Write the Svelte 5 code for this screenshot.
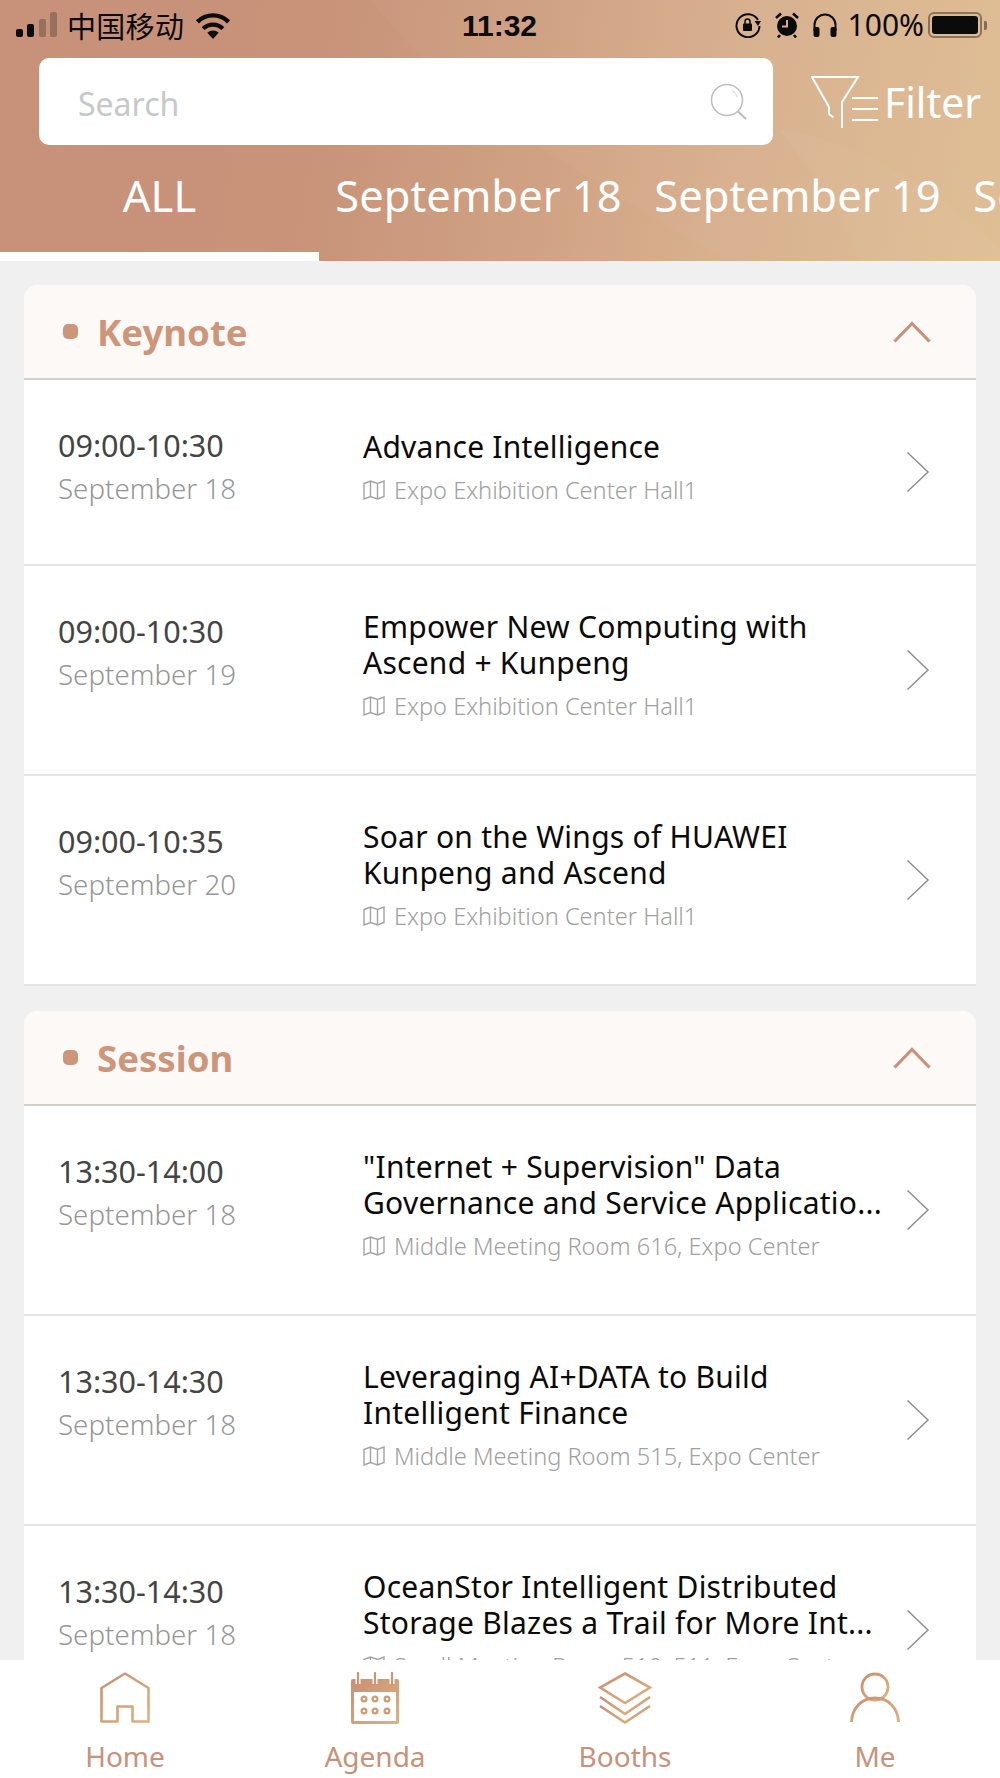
<script>
  const tabs = ['ALL', 'September 18', 'September 19', 'September 20'];
  const sections = [
    {
      name: 'Keynote',
      rows: [
        { time: '09:00-10:30', date: 'September 18', title: 'Advance Intelligence', place: 'Expo Exhibition Center Hall1' },
        { time: '09:00-10:30', date: 'September 19', title: 'Empower New Computing with Ascend + Kunpeng', place: 'Expo Exhibition Center Hall1' },
        { time: '09:00-10:35', date: 'September 20', title: 'Soar on the Wings of HUAWEI Kunpeng and Ascend', place: 'Expo Exhibition Center Hall1' }
      ]
    },
    {
      name: 'Session',
      rows: [
        { time: '13:30-14:00', date: 'September 18', title: '"Internet + Supervision" Data Governance and Service Applicatio...', place: 'Middle Meeting Room 616, Expo Center' },
        { time: '13:30-14:30', date: 'September 18', title: 'Leveraging AI+DATA to Build Intelligent Finance', place: 'Middle Meeting Room 515, Expo Center' },
        { time: '13:30-14:30', date: 'September 18', title: 'OceanStor Intelligent Distributed Storage Blazes a Trail for More Int...', place: 'Small Meeting Room 510, 511, Expo Center' }
      ]
    }
  ];
</script>

<div class="page">
  <header class="top">
    <svg class="waves" viewBox="0 0 1000 261" preserveAspectRatio="none" aria-hidden="true">
      <path d="M370 0 C420 60 470 110 560 160 C640 210 690 240 730 261 L1000 261 L1000 0 Z" fill="#fff" opacity="0.025" />
      <path d="M780 130 C860 140 940 190 1000 250 L1000 261 L860 261 C840 210 810 170 780 130 Z" fill="#fff" opacity="0.03" />
    </svg>

    <div class="status">
      <div class="status-left">
        <svg class="signal" viewBox="0 0 42 26" width="42" height="26" aria-hidden="true">
          <rect x="0" y="17" width="7" height="8" rx="2" fill="#0b0b0b" />
          <rect x="11" y="12" width="7" height="13" rx="2" fill="#0b0b0b" />
          <rect x="23" y="7" width="7" height="18" rx="2" fill="#0b0b0b" opacity="0.25" />
          <rect x="34" y="0" width="7" height="25" rx="2" fill="#0b0b0b" opacity="0.25" />
        </svg>
        <span class="carrier">中国移动</span>
        <svg viewBox="0 0 36 26" width="38" height="27" aria-hidden="true">
          <path d="M18 26 L12.5 20 A8 8 0 0 1 23.5 20 Z" fill="#0b0b0b" />
          <path d="M8.5 16 A13.5 13.5 0 0 1 27.5 16" fill="none" stroke="#0b0b0b" stroke-width="4" />
          <path d="M3 9.5 A21 21 0 0 1 33 9.5" fill="none" stroke="#0b0b0b" stroke-width="4.2" />
        </svg>
      </div>
      <div class="clock">11:32</div>
      <div class="status-right">
        <svg viewBox="0 0 26 26" width="26" height="26" aria-hidden="true">
          <path d="M23 8 A11.5 11.5 0 1 0 24.5 14" fill="none" stroke="#0b0b0b" stroke-width="2" />
          <path d="M19.5 9 L26 9 L23 14 Z" fill="#0b0b0b" />
          <rect x="8" y="11.5" width="9" height="7.5" rx="1" fill="#0b0b0b" />
          <path d="M10 12 V9.5 A2.5 2.5 0 0 1 15 9.5 V12" fill="none" stroke="#0b0b0b" stroke-width="1.5" />
        </svg>
        <svg class="alarm" viewBox="0 0 24 26" width="24" height="26" aria-hidden="true">
          <circle cx="12" cy="14" r="10" fill="#0b0b0b" />
          <path d="M1 6 L6 1.5 M23 6 L18 1.5 M5 23 L3 25.5 M19 23 L21 25.5" stroke="#0b0b0b" stroke-width="2.6" />
          <path d="M12 8 V14.5 H7" fill="none" stroke="#d6ac8c" stroke-width="2" />
        </svg>
        <svg class="phones" viewBox="0 0 26 24" width="26" height="24" aria-hidden="true">
          <path d="M2.5 18 V12 A10.5 10.5 0 0 1 23.5 12 V18" fill="none" stroke="#0b0b0b" stroke-width="2" />
          <rect x="1.5" y="14" width="6" height="10" rx="2" fill="#0b0b0b" />
          <rect x="18.5" y="14" width="6" height="10" rx="2" fill="#0b0b0b" />
        </svg>
        <span class="pct">100%</span>
        <span class="battery"><span class="level"></span></span>
        <span class="cap"></span>
      </div>
    </div>

    <div class="search-row">
      <div class="search">
        <span class="placeholder">Search</span>
        <svg viewBox="0 0 38 38" width="38" height="38" aria-hidden="true">
          <circle cx="17" cy="17" r="15.5" fill="none" stroke="#bcbec0" stroke-width="1.6" />
          <path d="M27.5 28 L36 36" stroke="#bcbec0" stroke-width="2" />
          <path d="M22 7.5 A11 11 0 0 1 27 14" fill="none" stroke="#dcdddd" stroke-width="1.2" />
        </svg>
      </div>
      <div class="filter">
        <svg viewBox="0 0 68 54" width="68" height="54" aria-hidden="true">
          <path d="M18 32 V39 L22.5 42.500 M18 32 L1 2 H47 L31 27 V53" fill="none" stroke="#fff" stroke-width="2" />
          <path d="M41 23 H67 M41 34 H67 M41 45 H67" stroke="#fff" stroke-width="2" />
        </svg>
        <span>Filter</span>
      </div>
    </div>

    <nav class="tabs">
      {#each tabs as tab, i}
        <div class="tab" class:active={i === 0}>{tab}</div>
      {/each}
    </nav>
  </header>

  <main class="list">
    {#each sections as section}
      <section class="card">
        <div class="card-head">
          <span class="dot"></span>
          <h2>{section.name}</h2>
          <svg viewBox="0 0 38 22" width="38" height="22" aria-hidden="true">
            <path d="M1.5 20.5 L19 2.5 L36.5 20.5" fill="none" stroke="#c8917a" stroke-width="3.2" />
          </svg>
        </div>
        {#each section.rows as row}
          <div class="row">
            <div class="when">
              <div class="time">{row.time}</div>
              <div class="date">{row.date}</div>
            </div>
            <div class="what">
              <div class="title">{row.title}</div>
              <div class="place">
                <svg viewBox="0 0 22 22" width="22" height="22" aria-hidden="true">
                  <path d="M1 4.5 L7.5 2 L14.500 4.500 L21 2 V17.500 L14.500 20 L7.500 17.500 L1 20 Z M7.500 2 V17.500 M14.500 4.500 V20" fill="none" stroke="#a3a3a3" stroke-width="1.4" />
                </svg>
                <span>{row.place}</span>
              </div>
            </div>
            <svg class="chev" viewBox="0 0 24 42" width="24" height="42" aria-hidden="true">
              <path d="M1.500 1.500 L22 21 L1.500 40.500" fill="none" stroke="#8f8f8f" stroke-width="1.500" />
            </svg>
          </div>
        {/each}
      </section>
    {/each}
  </main>

  <footer class="bar">
    <div class="bar-item">
      <svg viewBox="0 0 50 52" width="50" height="52" aria-hidden="true">
        <path d="M1.500 49.500 V16 L25 1.500 L48.500 16 V49.500 H32.500 V34.500 H17.500 V49.500 Z" fill="none" stroke="url(#g1)" stroke-width="2.600" stroke-linejoin="round" />
        <defs>
          <linearGradient id="g1" x1="0" y1="0" x2="1" y2="1">
            <stop offset="0" stop-color="#c98f72" /><stop offset="1" stop-color="#dcb27f" />
          </linearGradient>
        </defs>
      </svg>
      <span>Home</span>
    </div>
    <div class="bar-item">
      <svg viewBox="0 0 50 52" width="50" height="52" aria-hidden="true">
        <defs>
          <linearGradient id="g2" x1="0" y1="0" x2="1" y2="1">
            <stop offset="0" stop-color="#c98f72" /><stop offset="1" stop-color="#dcb27f" />
          </linearGradient>
        </defs>
        <path d="M1 9 Q1 7 3 7 H47 Q49 7 49 9 V50 Q49 52 47 52 H3 Q1 52 1 50 Z M4 20 V49 H46 V20 Z" fill="url(#g2)" fill-rule="evenodd" />
        <path d="M8 1 V12 M25 1 V12 M42 1 V12" stroke="#fff" stroke-width="5" />
        <path d="M8 1 V12 M25 1 V12 M42 1 V12" stroke="#cc9674" stroke-width="2.200" stroke-linecap="round" />
        <g fill="none" stroke="#cf9a76" stroke-width="2.200">
          <circle cx="14" cy="27" r="2.400" /><circle cx="25" cy="27" r="2.400" /><circle cx="37" cy="27" r="2.400" />
          <circle cx="14" cy="39" r="2.400" /><circle cx="25" cy="39" r="2.400" /><circle cx="37" cy="39" r="2.400" />
        </g>
      </svg>
      <span>Agenda</span>
    </div>
    <div class="bar-item">
      <svg viewBox="0 0 54 52" width="54" height="52" aria-hidden="true">
        <g fill="none" stroke="url(#g3)" stroke-width="2.600">
          <path d="M27 1.500 L52 15.500 L27 31 L2 15.500 Z" />
          <path d="M2 25 L27 42 L52 25" />
          <path d="M2 34 L27 50.500 L52 34" />
        </g>
        <defs>
          <linearGradient id="g3" x1="0" y1="0" x2="1" y2="1">
            <stop offset="0" stop-color="#c98f72" /><stop offset="1" stop-color="#dcb27f" />
          </linearGradient>
        </defs>
      </svg>
      <span>Booths</span>
    </div>
    <div class="bar-item">
      <svg viewBox="0 0 50 52" width="50" height="52" aria-hidden="true">
        <defs>
          <linearGradient id="g4" x1="0" y1="0" x2="1" y2="1">
            <stop offset="0" stop-color="#c98f72" /><stop offset="1" stop-color="#dcb27f" />
          </linearGradient>
        </defs>
        <circle cx="25" cy="15" r="13" fill="none" stroke="url(#g4)" stroke-width="2.800" />
        <path d="M1.500 50 C2 36 12 26 25 26 C38 26 48 36 48.500 50" fill="none" stroke="url(#g4)" stroke-width="2.800" />
      </svg>
      <span>Me</span>
    </div>
  </footer>
</div>

<style>
  :global(body) {
    margin: 0;
    background: #f0f0f0;
  }
  .page {
    width: 1000px;
    height: 1778px;
    display: flex;
    flex-direction: column;
    overflow: hidden;
    font-family: "Noto Sans", "Noto Sans CJK SC", sans-serif;
    background: #f0f0f0;
  }
  .top {
    position: relative;
    height: 261px;
    flex: none;
    display: flex;
    flex-direction: column;
    background: linear-gradient(100deg, #c7917a 0%, #c89379 32%, #d0a283 55%, #d8b08e 72%, #dfbd93 100%);
    color: #fff;
  }
  .waves {
    position: absolute;
    inset: 0;
    width: 100%;
    height: 100%;
  }
  .status, .search-row, .tabs {
    position: relative;
  }
  .status {
    height: 58px;
    flex: none;
    display: grid;
    grid-template-columns: 1fr auto 1fr;
    align-items: start;
    padding: 0 13px 0 16px;
    box-sizing: border-box;
    color: #0b0b0b;
  }
  .status-left, .status-right {
    display: flex;
    align-items: center;
    height: 50px;
  }
  .status-left .signal { margin-right: 9px; }
  .carrier {
    font-family: "Noto Sans CJK SC", sans-serif;
    font-size: 29px;
    line-height: 50px;
    margin-right: 10px;
    letter-spacing: 0.3px;
  }
  .clock {
    font-family: "Liberation Sans", sans-serif;
    font-size: 30px;
    font-weight: 700;
    line-height: 52px;
    margin-right: 4px;
  }
  .status-right { justify-content: flex-end; }
  .status-right .alarm { margin-left: 14px; }
  .status-right .phones { margin-left: 13px; }
  .pct {
    font-size: 30px;
    margin-left: 10px;
    line-height: 50px;
    white-space: nowrap;
  }
  .battery {
    width: 54px;
    height: 26px;
    box-sizing: border-box;
    margin-left: 4px;
    border: 2px solid rgba(40, 30, 20, 0.45);
    border-radius: 6px;
    padding: 2px;
    display: flex;
  }
  .level {
    flex: 1;
    background: #0b0b0b;
    border-radius: 3px;
  }
  .cap {
    width: 3px;
    height: 9px;
    margin-left: 2px;
    background: rgba(40, 30, 20, 0.5);
    border-radius: 0 2px 2px 0;
  }
  .search-row {
    height: 87px;
    flex: none;
    display: flex;
    padding-left: 39px;
  }
  .search {
    width: 734px;
    height: 87px;
    box-sizing: border-box;
    background: #fff;
    border-radius: 10px;
    display: flex;
    align-items: center;
    justify-content: space-between;
    padding: 0 25px 0 39px;
    margin-right: 38px;
  }
  .placeholder {
    font-size: 32px;
    color: #c6c8ca;
    padding-top: 4px;
  }
  .filter {
    display: flex;
    align-items: center;
    gap: 5px;
    font-size: 41px;
    height: 87px;
  }
  .tabs {
    display: flex;
    overflow: hidden;
    flex: 1;
    padding-top: 13px;
  }
  .tab {
    flex: 0 0 319px;
    box-sizing: border-box;
    text-align: center;
    font-size: 43.5px;
    line-height: 74px;
    white-space: nowrap;
    border-bottom: 9px solid transparent;
    height: 103px;
  }
  .tab.active { border-bottom-color: #fff; }
  .list {
    flex: 1;
    min-height: 0;
    overflow: hidden;
    padding: 24px 24px 0;
    display: flex;
    flex-direction: column;
    gap: 25px;
  }
  .card {
    background: #fff;
    border-radius: 14px 14px 0 0;
    flex: none;
  }
  .card-head {
    height: 95px;
    box-sizing: border-box;
    background: #fdf9f7;
    border-radius: 14px 14px 0 0;
    border-bottom: 2px solid #d5cfcc;
    display: flex;
    align-items: center;
    padding: 0 45px 0 39px;
  }
  .dot {
    width: 15px;
    height: 15px;
    border-radius: 5px;
    background: #cd9579;
    margin-right: 19px;
  }
  h2 {
    flex: 1;
    margin: 0;
    font-size: 36.6px;
    font-weight: 700;
    color: #cd9579;
    line-height: 1;
    padding-top: 2px;
  }
  .row {
    min-height: 186px;
    box-sizing: border-box;
    border-bottom: 2px solid #e5e5e5;
    display: flex;
    align-items: center;
    padding: 43px 46px 50px 34px;
  }
  .when {
    flex: 0 0 305px;
    align-self: flex-start;
    margin-top: 1px;
  }
  .time {
    font-size: 30.5px;
    line-height: 43px;
    color: #444;
  }
  .date {
    font-size: 27.7px;
    line-height: 43px;
    font-weight: 300;
    color: #969696;
  }
  .what {
    flex: 1;
    min-width: 0;
    padding-right: 8px;
  }
  .title {
    font-size: 30px;
    letter-spacing: 0.25px;
    line-height: 36px;
    color: #0a0a0a;
  }
  .place {
    display: flex;
    align-items: center;
    gap: 9px;
    margin-top: 7px;
    height: 36px;
    font-size: 23.6px;
    font-weight: 300;
    color: #a0a0a0;
    white-space: nowrap;
  }
  .chev {
    flex: none;
    margin-top: 7px;
  }
  .bar {
    height: 118px;
    flex: none;
    background: #fff;
    display: grid;
    grid-template-columns: repeat(4, 1fr);
    position: relative;
  }
  .bar-item {
    display: flex;
    flex-direction: column;
    align-items: center;
    padding-top: 12px;
    color: #c8917a;
    font-size: 28px;
    line-height: 36px;
  }
  .bar-item svg { margin-bottom: 14px; }
</style>
